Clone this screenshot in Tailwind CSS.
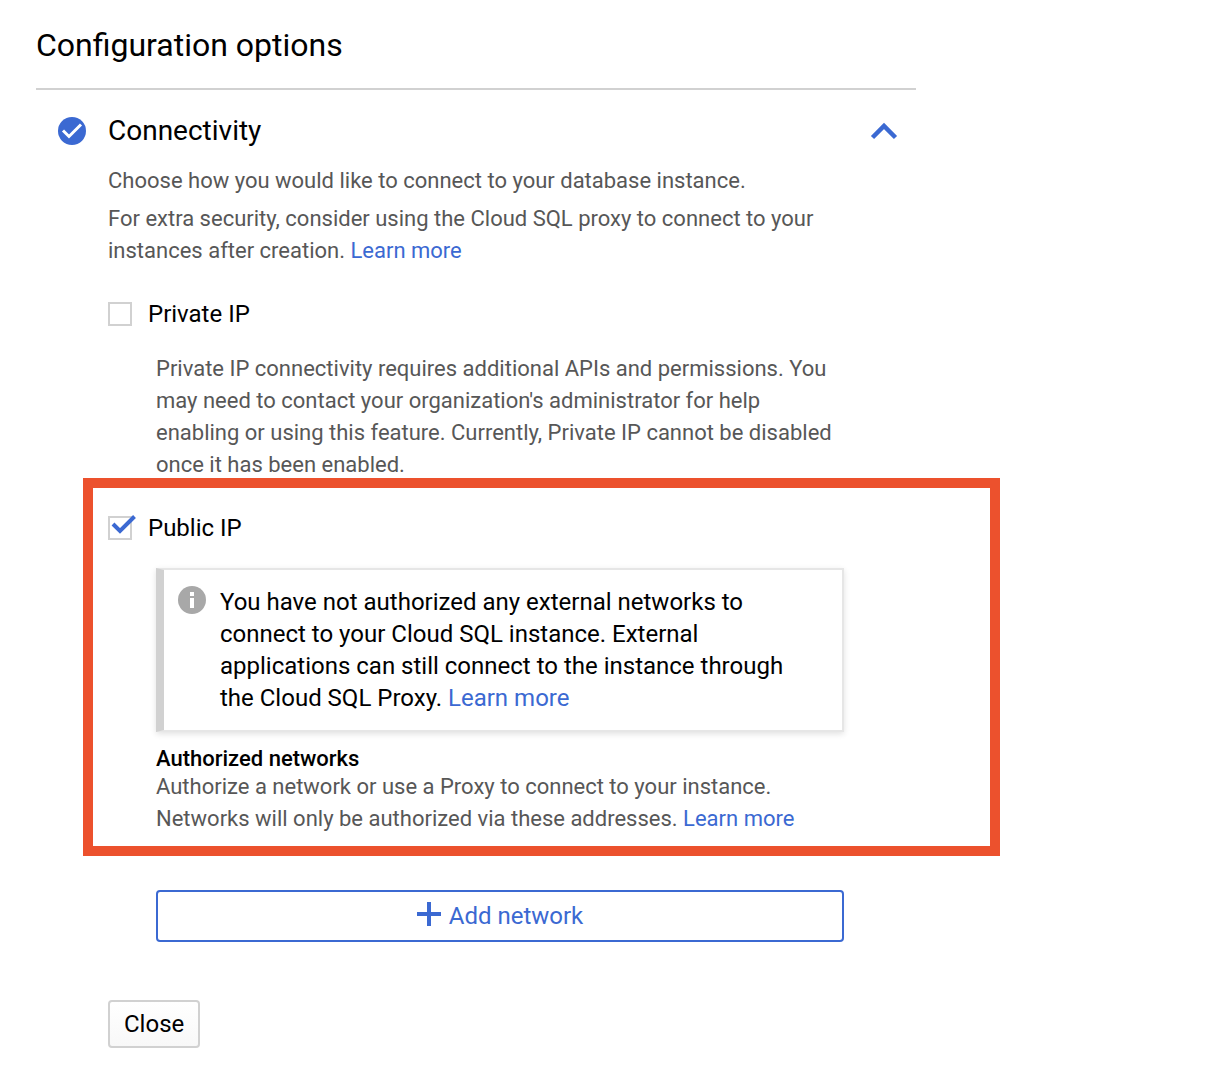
<!DOCTYPE html>
<html lang="en">
<head>
<meta charset="utf-8">
<meta name="viewport" content="width=device-width, initial-scale=1">
<title>Configuration options</title>
<script src="https://cdn.jsdelivr.net/npm/@tailwindcss/browser@4"></script>
</head>
<body class="bg-white font-['Roboto',sans-serif] text-black">
<main class="mx-9 max-w-[880px] pt-[25px] pb-5">
  <h1 class="border-b-2 border-[#d1d1d1] pb-[23px] text-[32px] leading-10">Configuration options</h1>

  <section class="pt-[21px]">
    <header class="flex items-center pr-4 pl-[22px]">
      <svg class="mr-[22px] size-7 shrink-0" viewBox="0 0 28 28" aria-hidden="true"><circle cx="14" cy="14" r="14" fill="#3b69d2"/><path d="M5 13.500l6 6L23 7.500" fill="none" stroke="#fff" stroke-width="3"/></svg>
      <h2 class="grow text-[28px] leading-10">Connectivity</h2>
      <button type="button" aria-label="Collapse" class="flex size-8 items-center justify-center">
        <svg class="size-8" viewBox="0 0 32 32" aria-hidden="true"><path d="M4.500 22.500L16 11l11.500 11.500" fill="none" stroke="#3b69d2" stroke-width="4.500"/></svg>
      </button>
    </header>

    <div class="pt-3.5 pl-[72px]">
      <div class="space-y-1.5 text-[22px] leading-8 text-[#575757]">
        <p>Choose how you would like to connect to your database instance.</p>
        <p class="max-w-[740px]">For extra security, consider using the Cloud SQL proxy to connect to your instances after creation. <a href="#" class="text-[#3b69d2]">Learn more</a></p>
      </div>

      <div class="mt-[31px] flex items-center gap-4">
        <input id="private-ip" type="checkbox" class="size-6 appearance-none border-2 border-[#d1d1d1] bg-white">
        <label for="private-ip" class="text-2xl leading-8">Private IP</label>
      </div>
      <p class="mt-[23px] ml-12 max-w-[688px] text-[22px] leading-8 text-[#575757]">Private IP connectivity requires additional APIs and permissions. You may need to contact your organization's administrator for help enabling or using this feature. Currently, Private IP cannot be disabled once it has been enabled.</p>

      <div class="relative pt-[31px]">
        <div class="pointer-events-none absolute -top-[3px] -right-[84px] -bottom-[21px] -left-[25px] border-10 border-[#ec512d]"></div>
        <div class="relative flex items-center gap-4">
          <input id="public-ip" type="checkbox" checked class="size-6 appearance-none border-2 border-[#d1d1d1] bg-white">
          <svg class="pointer-events-none absolute top-0 left-0 size-8" viewBox="0 0 32 32" aria-hidden="true"><path d="M5 12l7 7L26.500 4.500" fill="none" stroke="#3b69d2" stroke-width="4"/></svg>
          <label for="public-ip" class="text-2xl leading-8">Public IP</label>
        </div>
        <div class="ml-12 max-w-[688px]">
          <div class="mt-6 flex gap-3.5 border-2 border-l-8 border-[#e6e6e6] border-l-[#d1d1d1] py-4 pr-8 pl-3.5 shadow-[0_2px_6px_rgba(0,0,0,0.12)]">
            <svg class="size-7 shrink-0" viewBox="0 0 28 28" aria-hidden="true"><circle cx="14" cy="14" r="14" fill="#a8a8a8"/><path d="M12 6h4v4h-4zM12 12h4v10h-4z" fill="#fff"/></svg>
            <p class="text-2xl leading-8">You have not authorized any external networks to connect to your Cloud SQL instance. External applications can still connect to the instance through the Cloud SQL Proxy. <a href="#" class="text-[#3b69d2]">Learn more</a></p>
          </div>
          <h3 class="mt-[15px] text-[22px] leading-6 font-medium">Authorized networks</h3>
          <p class="text-[22px] leading-8 text-[#575757]">Authorize a network or use a Proxy to connect to your instance. Networks will only be authorized via these addresses. <a href="#" class="text-[#3b69d2]">Learn more</a></p>
        </div>
      </div>

      <div class="mt-[55px] ml-12 max-w-[688px]">
        <button type="button" class="flex h-13 w-full items-center justify-center gap-2 rounded border-2 border-[#3b69d2] bg-white text-2xl text-[#3b69d2]">
          <svg class="mb-1 size-6" viewBox="0 0 24 24" aria-hidden="true"><path d="M12 0v24M0 12h24" stroke="#3b69d2" stroke-width="4"/></svg>
          Add network
        </button>
      </div>
      <button type="button" class="mt-[58px] h-12 rounded border-2 border-[#d1d1d1] bg-linear-to-b from-white to-[#f8f8f8] px-3.5 text-2xl">Close</button>
    </div>
  </section>
</main>
</body>
</html>
